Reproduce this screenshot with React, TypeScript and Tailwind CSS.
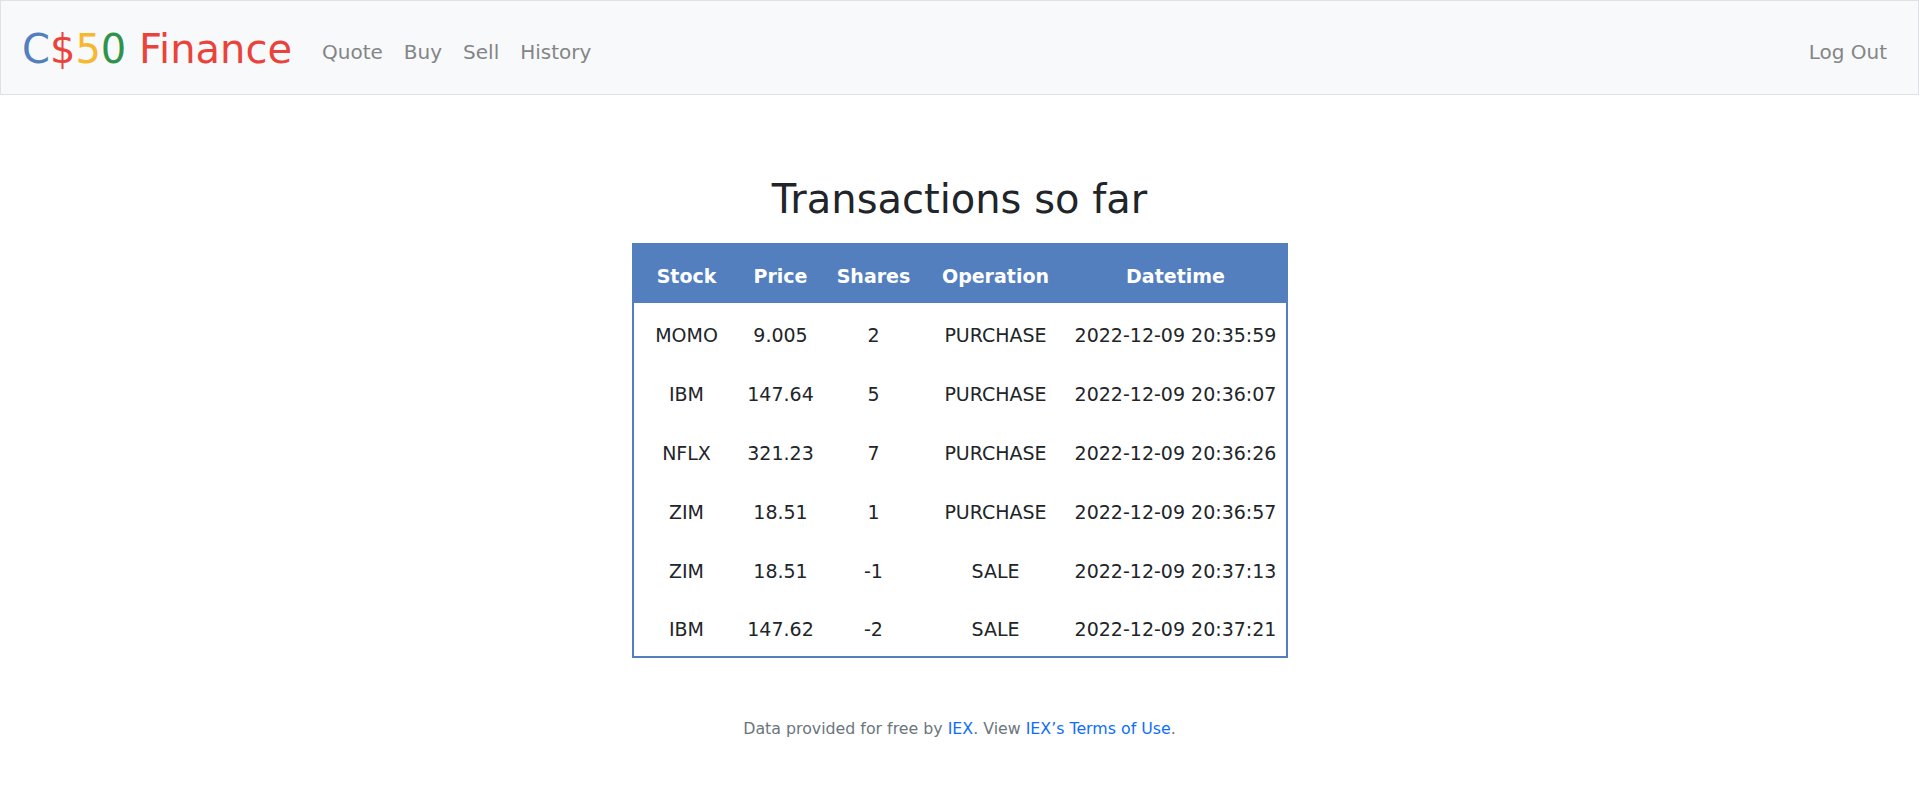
const rows = [
  { stock: "MOMO", price: "9.005", shares: "2", op: "PURCHASE", time: "2022-12-09 20:35:59" },
  { stock: "IBM", price: "147.64", shares: "5", op: "PURCHASE", time: "2022-12-09 20:36:07" },
  { stock: "NFLX", price: "321.23", shares: "7", op: "PURCHASE", time: "2022-12-09 20:36:26" },
  { stock: "ZIM", price: "18.51", shares: "1", op: "PURCHASE", time: "2022-12-09 20:36:57" },
  { stock: "ZIM", price: "18.51", shares: "-1", op: "SALE", time: "2022-12-09 20:37:13" },
  { stock: "IBM", price: "147.62", shares: "-2", op: "SALE", time: "2022-12-09 20:37:21" },
];

export default function App() {
  return (
    <div className="min-h-[791px] bg-white text-[#212529] font-['DejaVu_Sans',sans-serif]">
      <nav className="h-[95px] bg-[#f8f9fa] border border-[#dee2e6] flex items-start pt-[24px] pl-[21px] pr-[31px]">
        <a href="#" className="text-[40px] leading-[48px]">
          <span className="text-[#537fbe]">C</span>
          <span className="text-[#ea433b]">$</span>
          <span className="text-[#f5b82e]">5</span>
          <span className="text-[#2e944b]">0</span>
          <span className="text-[#ea433b]"> Finance</span>
        </a>
        <ul className="flex mt-[12px] ml-[30px] gap-[21px] text-[20px] leading-[30px] text-[#848586]">
          <li><a href="#">Quote</a></li>
          <li><a href="#">Buy</a></li>
          <li><a href="#">Sell</a></li>
          <li><a href="#">History</a></li>
        </ul>
        <a href="#" className="ml-auto mt-[12px] text-[20px] leading-[30px] text-[#848586]">Log Out</a>
      </nav>

      <main className="flex flex-col items-center pt-[80px]">
        <h1 className="text-[40px] leading-[48px]">Transactions so far</h1>
        <table className="mt-[20px] border-2 border-[#537fbe] border-collapse text-[19px] text-center">
          <thead>
            <tr className="bg-[#537fbe] text-white font-bold h-[59px]">
              <th className="w-[107px] pt-[4px]">Stock</th>
              <th className="w-[82px] pt-[4px]">Price</th>
              <th className="w-[104px] pt-[4px]">Shares</th>
              <th className="w-[140px] pt-[4px]">Operation</th>
              <th className="w-[221px] pt-[4px]">Datetime</th>
            </tr>
          </thead>
          <tbody>
            {rows.map((r, i) => (
              <tr key={i} className="h-[59px]">
                <td className="pt-[5px]">{r.stock}</td>
                <td className="pt-[5px]">{r.price}</td>
                <td className="pt-[5px]">{r.shares}</td>
                <td className="pt-[5px]">{r.op}</td>
                <td className="pt-[5px]">{r.time}</td>
              </tr>
            ))}
          </tbody>
        </table>
      </main>

      <footer className="mt-[58px] text-center text-[15.8px] leading-[25px] text-[#6c757d]">
        Data provided for free by <a href="#" className="text-[#0d6efd]">IEX</a>. View{" "}
        <a href="#" className="text-[#0d6efd]">IEX’s Terms of Use</a>.
      </footer>
    </div>
  );
}
